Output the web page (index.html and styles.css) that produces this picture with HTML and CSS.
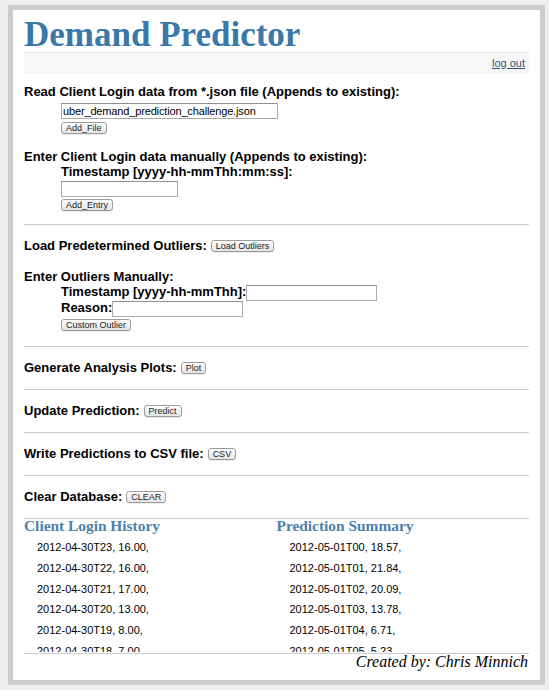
FILE: index.html
```html
<!DOCTYPE html>
<html lang="en">
<head>
<meta charset="utf-8">
<title>Demand Predictor</title>
<link rel="stylesheet" href="styles.css">
</head>
<body>
<div class="page">
  <h1 class="title">Demand Predictor</h1>
  <div class="navbar"><a class="logout" href="#">log out</a></div>

  <div class="section first">
    <div class="label">Read Client Login data from *.json file (Appends to existing):</div>
    <div class="indent">
      <input class="field f-file" type="text" value="uber_demand_prediction_challenge.json">
      <button class="btn b-first">Add_File</button>
    </div>
    <div class="label gap">Enter Client Login data manually (Appends to existing):</div>
    <div class="indent">
      <div class="label">Timestamp [yyyy-hh-mmThh:mm:ss]:</div>
      <input class="field f-ts" type="text">
      <button class="btn b-entry">Add_Entry</button>
    </div>
  </div>

  <div class="section outliers">
    <div class="row">
      <span class="label">Load Predetermined Outliers:</span>
      <button class="btn">Load Outliers</button>
    </div>
    <div class="label gap-o">Enter Outliers Manually:</div>
    <div class="indent">
      <div class="inline-row first-row">
        <span class="label tight">Timestamp [yyyy-hh-mmThh]:</span>
        <input class="field f-short" type="text">
      </div>
      <div class="inline-row">
        <span class="label tight">Reason:</span>
        <input class="field f-short" type="text">
      </div>
      <button class="btn b-custom">Custom Outlier</button>
    </div>
  </div>

  <div class="section">
    <div class="row">
      <span class="label">Generate Analysis Plots:</span>
      <button class="btn">Plot</button>
    </div>
  </div>

  <div class="section">
    <div class="row">
      <span class="label">Update Prediction:</span>
      <button class="btn">Predict</button>
    </div>
  </div>

  <div class="section">
    <div class="row">
      <span class="label">Write Predictions to CSV file:</span>
      <button class="btn">CSV</button>
    </div>
  </div>

  <div class="section">
    <div class="row">
      <span class="label">Clear Database:</span>
      <button class="btn">CLEAR</button>
    </div>
  </div>

  <div class="history">
    <div class="col">
      <h2 class="col-title">Client Login History</h2>
      <ul class="entries">
        <li>2012-04-30T23, 16.00,</li>
        <li>2012-04-30T22, 16.00,</li>
        <li>2012-04-30T21, 17.00,</li>
        <li>2012-04-30T20, 13.00,</li>
        <li>2012-04-30T19, 8.00,</li>
        <li>2012-04-30T18, 7.00,</li>
      </ul>
    </div>
    <div class="col">
      <h2 class="col-title">Prediction Summary</h2>
      <ul class="entries">
        <li>2012-05-01T00, 18.57,</li>
        <li>2012-05-01T01, 21.84,</li>
        <li>2012-05-01T02, 20.09,</li>
        <li>2012-05-01T03, 13.78,</li>
        <li>2012-05-01T04, 6.71,</li>
        <li>2012-05-01T05, 5.23,</li>
      </ul>
    </div>
  </div>

  <div class="footer">Created by: Chris Minnich</div>
</div>
</body>
</html>
```

FILE: styles.css
```css
html, body {
  background: #eeeeee;
}
body {
  margin: 5px 4px 0 8px;
  font-family: "Liberation Sans", Arial, sans-serif;
  color: #000;
}
.page {
  box-sizing: border-box;
  width: 537px;
  height: 680px;
  border: 5px solid #cccccc;
  background: #ffffff;
  padding: 0 11px;
  overflow: hidden;
}
.title {
  margin: 8px 0 0;
  font: bold 35px/34px "Liberation Serif", "Times New Roman", serif;
  color: #3a78a8;
}
.navbar {
  height: 20px;
  border-top: 1px solid #e6e6e6;
  background: #f7f7f7;
  text-align: right;
  padding-right: 4px;
  font-size: 11px;
  line-height: 20px;
}
.logout {
  color: #34527a;
  text-decoration: underline;
}
.section {
  border-bottom: 1px solid #cccccc;
  padding: 13px 0 14px;
}
.section.first {
  padding: 11px 0 13px;
}
.section.outliers {
  padding: 13px 0 15px;
}
.label {
  font-weight: bold;
  font-size: 13px;
  line-height: 15px;
}
.label.tight {
  line-height: 13px;
}
.gap {
  margin-top: 15px;
}
.gap-o {
  margin-top: 16px;
}
.indent {
  display: flex;
  flex-direction: column;
  align-items: flex-start;
  padding-left: 37px;
}
.row {
  display: flex;
  align-items: center;
  gap: 4px;
}
.inline-row {
  display: flex;
  align-items: flex-start;
}
.inline-row.first-row {
  margin-top: 1px;
}
.field {
  box-sizing: border-box;
  height: 16px;
  margin: 0;
  padding: 0 1px;
  border: 1px solid #aaaaaa;
  border-top-color: #8e8e8e;
  border-radius: 0;
  background: #fff;
  font: 11px/14px "Liberation Sans", Arial, sans-serif;
  letter-spacing: -0.15px;
  color: #000;
}
.f-file {
  width: 217px;
  margin-top: 4px;
}
.f-ts {
  width: 117px;
  margin-top: 2px;
}
.f-short {
  width: 131px;
}
.btn {
  box-sizing: border-box;
  height: 12px;
  margin: 0;
  padding: 0 4px;
  border: 1px solid #9c9c9c;
  border-radius: 3px;
  background: linear-gradient(#ffffff, #e4e4e4);
  box-shadow: 0 1px 0 rgba(0, 0, 0, 0.08);
  font: 9px/10px "Liberation Sans", Arial, sans-serif;
  color: #222;
}
.b-first {
  margin-top: 3px;
}
.b-entry {
  margin-top: 2px;
}
.b-custom {
  margin-top: 2px;
}
.history {
  display: grid;
  grid-template-columns: 1fr 1fr;
}
.col-title {
  margin: 0;
  font: bold 15.4px/13px "Liberation Serif", "Times New Roman", serif;
  color: #4a7fae;
}
.entries {
  box-sizing: border-box;
  list-style: none;
  margin: 0 0 1px;
  padding: 5px 0 0 13px;
  height: 120px;
  overflow: hidden;
  font-size: 11px;
  line-height: 20.75px;
}
.footer {
  border-top: 1px solid #cccccc;
  text-align: right;
  padding-right: 1px;
  font: italic 16px/15px "Liberation Serif", "Times New Roman", serif;
}
```
